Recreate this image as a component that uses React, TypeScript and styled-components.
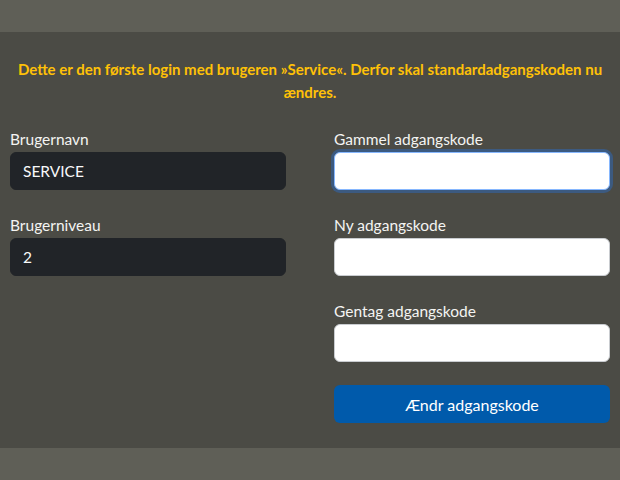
import styled, { createGlobalStyle } from "styled-components";

const GlobalStyle = createGlobalStyle`
* { box-sizing: border-box; }
html, body {
  margin: 0;
  padding: 0;
  background: #5f5f57;
  font-family: Lato, "Open Sans", sans-serif;
}
`;

const Page = styled.div`
  height: 480px;
  padding: 32px 0 33px;
  background: #5f5f57;
`;

const Panel = styled.section`
  background: #4b4b45;
  padding: 26px 10px 25px;
`;

const Notice = styled.p`
  margin: 0 0 24px;
  color: #ffc107;
  font-weight: 700;
  font-size: 15px;
  line-height: 23px;
  text-align: center;
`;

const Columns = styled.div`
  display: grid;
  grid-template-columns: 1fr 1fr;
  column-gap: 48px;
`;

const Column = styled.div`
  display: flex;
  flex-direction: column;
`;

const Group = styled.div`
  margin-bottom: 24px;
`;

const Label = styled.label`
  display: block;
  color: #f4f4f2;
  font-size: 15.5px;
  line-height: 22px;
  margin-bottom: 2px;
`;

const Input = styled.input<{ $dark?: boolean; $focus?: boolean }>`
  display: block;
  width: 100%;
  height: 38px;
  padding: 0 12px;
  font-family: inherit;
  font-size: 15.5px;
  border-radius: 6px;
  outline: none;
  color: ${(p) => (p.$dark ? "#f8f9fa" : "#212529")};
  background: ${(p) => (p.$dark ? "#212428" : "#ffffff")};
  border: 1px solid ${(p) => (p.$dark ? "#212428" : p.$focus ? "#86b7fe" : "#c9ccd0")};
  box-shadow: ${(p) => (p.$focus ? "0 0 0 3px #3c5a80" : "none")};
`;

const Button = styled.button`
  height: 38px;
  width: 100%;
  margin-top: -1px;
  border: none;
  border-radius: 6px;
  background: #005aab;
  color: #ffffff;
  font-family: inherit;
  font-size: 16px;
`;

export default function App() {
  return (
    <>
      <GlobalStyle />
      <Page>
        <Panel>
          <Notice>
            Dette er den første login med brugeren »Service«. Derfor skal standardadgangskoden nu ændres.
          </Notice>
          <Columns>
            <Column>
              <Group>
                <Label>Brugernavn</Label>
                <Input $dark readOnly value="SERVICE" />
              </Group>
              <Group>
                <Label>Brugerniveau</Label>
                <Input $dark readOnly value="2" />
              </Group>
            </Column>
            <Column>
              <Group>
                <Label>Gammel adgangskode</Label>
                <Input type="password" $focus />
              </Group>
              <Group>
                <Label>Ny adgangskode</Label>
                <Input type="password" />
              </Group>
              <Group>
                <Label>Gentag adgangskode</Label>
                <Input type="password" />
              </Group>
              <Button>Ændr adgangskode</Button>
            </Column>
          </Columns>
        </Panel>
      </Page>
    </>
  );
}
